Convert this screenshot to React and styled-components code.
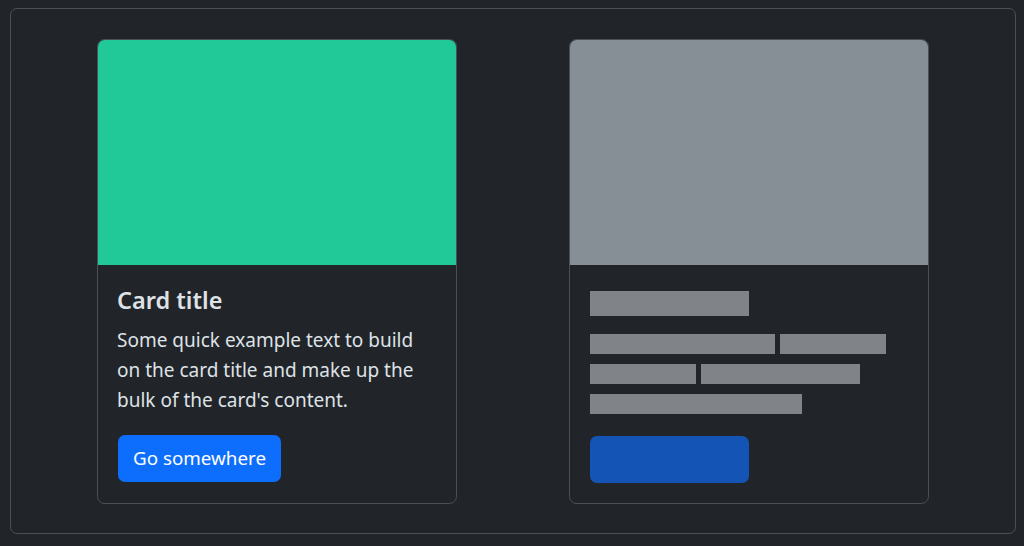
import React from "react";
import styled, { createGlobalStyle } from "styled-components";

const GlobalStyle = createGlobalStyle`
  html, body {
    margin: 0;
    background: #212529;
    color: #dee2e6;
    font-family: "Noto Sans", "Open Sans", sans-serif;
  }
  #root {
    padding: 8px 8px 12px 10px;
  }
`;

const Frame = styled.div`
  border: 1px solid #495057;
  border-radius: 7px;
  padding: 30px 0 29px;
  display: flex;
  justify-content: center;
  gap: 112px;
`;

const Card = styled.div`
  width: 360px;
  box-sizing: border-box;
  border: 1px solid #495057;
  border-radius: 7.5px;
  overflow: hidden;
  background: #212529;
  display: flex;
  flex-direction: column;
`;

const CardImage = styled.div`
  height: 225px;
  background: ${(p) => p.$fill};
`;

const CardBody = styled.div`
  padding: 20px 20px 20px 19px;
`;

const Title = styled.h5`
  margin: 0 0 10px;
  font-size: 23.5px;
  font-weight: 600;
  line-height: 30px;
  color: #dee2e6;
`;

const Text = styled.p`
  margin: 0 0 20px;
  font-size: 19px;
  line-height: 30px;
  color: #dee2e6;
`;

const Button = styled.a`
  display: inline-block;
  box-sizing: border-box;
  height: 47px;
  margin-left: 1px;
  padding: 7.5px 15px;
  font-size: 18.8px;
  line-height: 30px;
  color: #fff;
  background: #0d6efd;
  border-radius: 7px;
  text-decoration: none;
`;

const TitleBar = styled.div`
  height: 25px;
  width: 159px;
  margin: 6px 0 18px 1px;
  background: #808488;
`;

const Lines = styled.div`
  display: flex;
  flex-direction: column;
  gap: 10px;
  margin: 0 0 22px 1px;
`;

const LineRow = styled.div`
  display: flex;
  gap: 5px;
`;

const Bar = styled.span`
  display: block;
  height: 20px;
  width: ${(p) => p.$w}px;
  background: #808488;
`;

const GhostButton = styled.div`
  width: 159px;
  height: 47px;
  margin-left: 1px;
  border-radius: 7px;
  background: #1454b4;
`;

export default function App() {
  return (
    <>
      <GlobalStyle />
      <Frame>
        <Card>
          <CardImage $fill="#20c997" />
          <CardBody>
            <Title>Card title</Title>
            <Text>
              Some quick example text to build on the card title and make up the
              bulk of the card's content.
            </Text>
            <Button href="#">Go somewhere</Button>
          </CardBody>
        </Card>
        <Card>
          <CardImage $fill="#868e96" />
          <CardBody>
            <TitleBar />
            <Lines>
              <LineRow>
                <Bar $w={185} />
                <Bar $w={106} />
              </LineRow>
              <LineRow>
                <Bar $w={106} />
                <Bar $w={159} />
              </LineRow>
              <LineRow>
                <Bar $w={212} />
              </LineRow>
            </Lines>
            <GhostButton />
          </CardBody>
        </Card>
      </Frame>
    </>
  );
}
